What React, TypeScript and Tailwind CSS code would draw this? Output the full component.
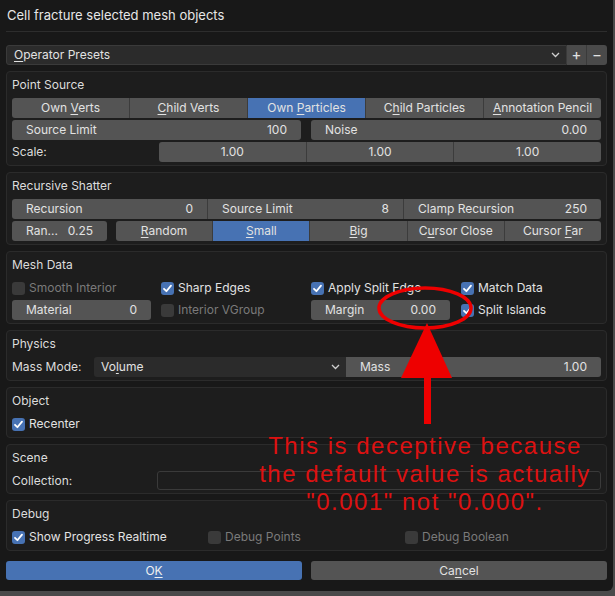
import React from "react";

const ui = "font-['Inter','Noto_Sans',sans-serif] text-[12px]";

function U({ t, i }: { t: string; i: number }) {
  return (
    <span className="whitespace-pre">
      {t.slice(0, i)}
      <span className="underline underline-offset-2">{t[i]}</span>
      {t.slice(i + 1)}
    </span>
  );
}

function Check({ on, label, off }: { on?: boolean; label: string; off?: boolean }) {
  return (
    <div className="flex items-center gap-[4px] h-[20px]">
      <div
        className={
          "w-[13px] h-[13px] rounded-[3px] flex items-center justify-center " +
          (on ? "bg-[#4772b3]" : "bg-[#3a3a3a]")
        }
      >
        {on && (
          <svg width="11" height="11" viewBox="0 0 11 11">
            <path d="M2 5.8 L4.4 8.2 L9 2.6" stroke="#fff" strokeWidth="1.8" fill="none" strokeLinecap="round" strokeLinejoin="round" />
          </svg>
        )}
      </div>
      <span className={off ? "text-[#7a7a7a]" : "text-[#e2e2e2]"}>{label}</span>
    </div>
  );
}

function Num({ label, value, className = "" }: { label?: string; value: string; className?: string }) {
  return (
    <div className={"h-[20px] bg-[#545454] flex items-center justify-between px-[14px] text-[#e2e2e2] " + className}>
      <span>{label}</span>
      <span>{value}</span>
    </div>
  );
}

function Seg({ items, active }: { items: React.ReactNode[]; active: number }) {
  return (
    <div className="flex h-[20px] rounded-[3px] overflow-hidden">
      {items.map((it, i) => (
        <div
          key={i}
          className={
            "flex-1 flex items-center justify-center text-[#e2e2e2] " +
            (i === active ? "bg-[#4772b3]" : "bg-[#545454]") +
            (i > 0 ? " border-l border-[#3c3c3c]" : "")
          }
        >
          {it}
        </div>
      ))}
    </div>
  );
}

function Chevron() {
  return (
    <svg width="9" height="6" viewBox="0 0 9 6">
      <path d="M1 1 L4.5 4.5 L8 1" stroke="#cfcfcf" strokeWidth="1.3" fill="none" />
    </svg>
  );
}

function Panel({ title, children }: { title: string; children: React.ReactNode }) {
  return (
    <div className="mt-[6px] border border-[#2b2b2b] rounded-[4px] bg-[#1d1d1d] px-[5px] pb-[3px]">
      <div className="h-[26px] flex items-center text-[#dcdcdc]">{title}</div>
      <div className="flex flex-col gap-[2px]">{children}</div>
    </div>
  );
}

export default function App() {
  return (
    <div className={ui + " relative w-[615px] h-[596px] bg-[#4a4a4a] overflow-hidden"}>
      <div className="w-[613px] h-[591px] bg-[#181818] rounded-br-[6px] px-[6px] flex flex-col">
        <div className="h-[32px] flex items-center pl-[1px] text-[13px] text-[#e6e6e6] border-b border-[#2d2d2d]">
          Cell fracture selected mesh objects
        </div>
        <div className="mt-[13px] flex h-[20px]">
          <div className="flex-1 flex items-center justify-between bg-[#2b2b2b] border border-[#3a3a3a] rounded-l-[3px] pl-[7px] pr-[6px] text-[#e2e2e2]">
            <U t="Operator Presets" i={0} />
            <Chevron />
          </div>
          <div className="w-[20px] bg-[#4a4a4a] flex items-center justify-center text-[#e2e2e2] text-[15px] border-r border-[#3a3a3a]">+</div>
          <div className="w-[20px] bg-[#4a4a4a] rounded-r-[3px] flex items-center justify-center text-[#e2e2e2] text-[15px]">−</div>
        </div>

        <Panel title="Point Source">
          <Seg
            active={2}
            items={[
              <U t="Own Verts" i={4} />,
              <U t="Child Verts" i={0} />,
              <U t="Own Particles" i={4} />,
              <U t="Child Particles" i={1} />,
              <U t="Annotation Pencil" i={0} />,
            ]}
          />
          <div className="flex gap-[10px]">
            <Num label="Source Limit" value="100" className="w-[289px] rounded-[3px]" />
            <Num label="Noise" value="0.00" className="flex-1 rounded-[3px]" />
          </div>
          <div className="flex items-center">
            <div className="w-[147px] text-[#dcdcdc]">Scale:</div>
            <div className="flex-1 flex rounded-[3px] overflow-hidden">
              <Num value="1.00" className="flex-1 !justify-center" />
              <Num value="1.00" className="flex-1 !justify-center border-l border-[#3c3c3c]" />
              <Num value="1.00" className="flex-1 !justify-center border-l border-[#3c3c3c]" />
            </div>
          </div>
        </Panel>

        <Panel title="Recursive Shatter">
          <div className="flex rounded-[3px] overflow-hidden">
            <Num label="Recursion" value="0" className="w-[195px]" />
            <Num label="Source Limit" value="8" className="w-[196px] border-l border-[#3c3c3c]" />
            <Num label="Clamp Recursion" value="250" className="flex-1 border-l border-[#3c3c3c]" />
          </div>
          <div className="flex gap-[9px]">
            <Num label="Ran..." value="0.25" className="w-[95px] rounded-[3px]" />
            <div className="flex-1">
              <Seg
                active={1}
                items={[
                  <U t="Random" i={0} />,
                  <U t="Small" i={0} />,
                  <U t="Big" i={0} />,
                  <U t="Cursor Close" i={1} />,
                  <U t="Cursor Far" i={7} />,
                ]}
              />
            </div>
          </div>
        </Panel>

        <Panel title="Mesh Data">
          <div className="grid grid-cols-[149px_150px_150px_1fr]">
            <Check label="Smooth Interior" off />
            <Check label="Sharp Edges" on />
            <Check label="Apply Split Edge" on />
            <Check label="Match Data" on />
          </div>
          <div className="grid grid-cols-[149px_150px_150px_1fr]">
            <Num label="Material" value="0" className="w-[139px] rounded-[3px]" />
            <Check label="Interior VGroup" off />
            <Num label="Margin" value="0.00" className="w-[139px] rounded-[3px]" />
            <Check label="Split Islands" on />
          </div>
        </Panel>

        <Panel title="Physics">
          <div className="flex items-center">
            <div className="w-[82px] text-[#dcdcdc]">Mass Mode:</div>
            <div className="flex-1 flex h-[20px]">
              <div className="w-[252px] flex items-center justify-between bg-[#2b2b2b] rounded-l-[3px] pl-[7px] pr-[6px] text-[#e2e2e2]">
                <U t="Volume" i={2} />
                <Chevron />
              </div>
              <Num label="Mass" value="1.00" className="flex-1 rounded-r-[3px]" />
            </div>
          </div>
        </Panel>

        <Panel title="Object">
          <Check label="Recenter" on />
        </Panel>

        <Panel title="Scene">
          <div className="flex items-center">
            <div className="w-[145px] text-[#dcdcdc]">Collection:</div>
            <div className="flex-1 h-[19px] bg-[#1d1d1d] border border-[#3a3a3a] rounded-[3px]" />
          </div>
        </Panel>

        <Panel title="Debug">
          <div className="grid grid-cols-[196px_197px_1fr]">
            <Check label="Show Progress Realtime" on />
            <Check label="Debug Points" off />
            <Check label="Debug Boolean" off />
          </div>
        </Panel>

        <div className="mt-[10px] flex gap-[9px]">
          <div className="flex-1 h-[19px] rounded-[3px] bg-[#4772b3] flex items-center justify-center text-[#f0f0f0]">
            <U t="OK" i={1} />
          </div>
          <div className="flex-1 h-[19px] rounded-[3px] bg-[#545454] flex items-center justify-center text-[#e2e2e2]">
            <U t="Cancel" i={2} />
          </div>
        </div>
      </div>

      <svg className="absolute inset-0 pointer-events-none" width="615" height="596">
        <ellipse cx="425" cy="308" rx="46" ry="20" fill="none" stroke="#ee0000" strokeWidth="3.5" />
        <polygon points="427,323 401,378 452,378" fill="#ee0000" />
        <rect x="424" y="376" width="7" height="48" fill="#ee0000" />
      </svg>
      <div className="absolute left-[240px] top-[432px] w-[370px] text-center font-['Liberation_Sans',sans-serif] text-[24px] leading-[28px] tracking-[1.5px] text-[#dd1111]">
        <div>This is deceptive because</div>
        <div>the default value is actually</div>
        <div>"0.001" not "0.000".</div>
      </div>
    </div>
  );
}
